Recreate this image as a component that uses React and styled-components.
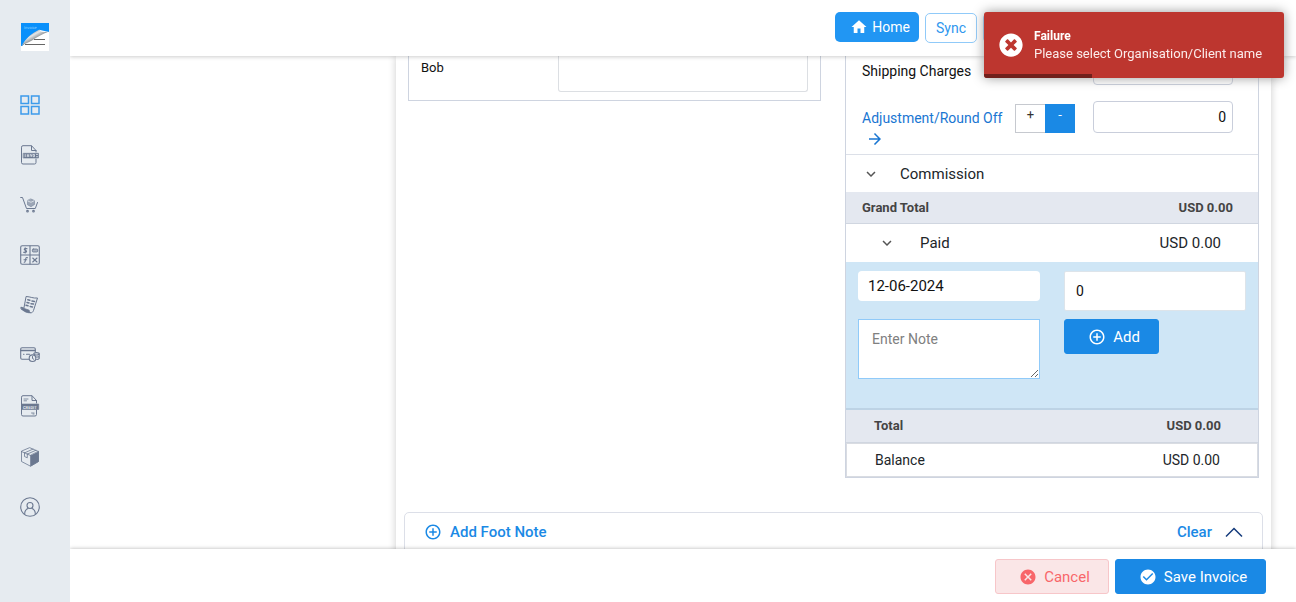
import React, { useState } from "react";
import styled, { createGlobalStyle, css } from "styled-components";
import {
  MdHome,
  MdAddCircleOutline,
  MdArrowForward,
  MdKeyboardArrowDown,
  MdCancel,
  MdCheckCircle,
} from "react-icons/md";
import { FaTimesCircle } from "react-icons/fa";

const GlobalStyle = createGlobalStyle`
  *, *::before, *::after { box-sizing: border-box; }
  body {
    margin: 0;
    background: #fff;
    color: #212529;
    font-family: Roboto, "Liberation Sans", sans-serif;
    font-size: 14px;
    line-height: 20px;
  }
  button, input, textarea { font: inherit; margin: 0; }
  button { cursor: pointer; }
  a { text-decoration: none; }
`;

const Shell = styled.div`
  display: flex;
  height: 100vh;
`;

const Sidebar = styled.nav`
  display: flex;
  flex-direction: column;
  flex: none;
  width: 70px;
  padding: 22px 20px;
  background: #e6ebf0;
  z-index: 2;
`;

const LogoLink = styled.a`
  height: 73px;
`;

const NavList = styled.ul`
  display: flex;
  flex-direction: column;
  gap: 30px;
  margin: 0;
  padding: 0;
  list-style: none;
`;

const NavLink = styled.a`
  display: block;
  color: ${(p) => (p.$active ? "#3d9bea" : "#6b7890")};
  svg { display: block; }
`;

const Main = styled.div`
  display: flex;
  flex-direction: column;
  flex: 1;
  min-width: 0;
`;

const Header = styled.header`
  display: flex;
  align-items: flex-start;
  justify-content: flex-end;
  gap: 6px;
  flex: none;
  height: 56px;
  padding: 12px 273px 0 0;
  background: #fff;
  box-shadow: 0 1px 4px rgba(0, 0, 0, 0.2);
  z-index: 1;
`;

const HeaderButton = styled.button`
  display: flex;
  align-items: center;
  justify-content: center;
  gap: 4px;
  height: 30px;
  border-radius: 5px;
  ${(p) =>
    p.$primary
      ? css`
          width: 84px;
          padding: 0 6px 0 12px;
          border: 0;
          background: #2196f3;
          color: #fff;
        `
      : css`
          width: ${p.$square ? "40px" : "52px"};
          margin-top: 1px;
          padding: 0;
          border: 1px solid #90caf9;
          background: #fff;
          color: #2f97ee;
        `}
`;

const Content = styled.main`
  flex: 1;
  min-height: 0;
  overflow: hidden;
  padding: 0 25px 0 326px;
`;

const Sheet = styled.form`
  min-height: 100%;
  padding: 0 8px;
  background: #fff;
  box-shadow: 0 0 8px rgba(0, 0, 0, 0.2);
`;

const Columns = styled.div`
  display: grid;
  grid-template-columns: 413fr 414fr;
  align-items: start;
  gap: 24px;
  padding: 0 4px;
`;

const FieldPanel = styled.section`
  display: grid;
  grid-template-columns: 137px 1fr;
  padding: 0 12px 8px;
  border: solid #ced4e0;
  border-width: 0 1px 1px;
`;

const FieldLabel = styled.label`
  padding-top: 2px;
  font-size: 13px;
  color: #111;
`;

const FieldArea = styled.textarea`
  height: 36px;
  border: solid #dcdfe3;
  border-width: 0 1px 1px;
  border-radius: 0 0 3px 3px;
  resize: none;
`;

const Summary = styled.section`
  border: solid #ced4e0;
  border-width: 0 1px 1px;
`;

const ChargeRow = styled.div`
  display: grid;
  grid-template-columns: 1fr 140px;
  height: ${(p) => (p.$first ? "45px" : "54px")};
  padding: 0 25px 0 16px;
  border-bottom: ${(p) => (p.$first ? "0" : "1px solid #dce0e8")};
`;

const ChargeLabel = styled.label`
  padding-top: 5px;
  color: #111;
`;

const AdjustGroup = styled.div`
  display: flex;
  justify-content: space-between;
  padding-right: 18px;
`;

const AdjustLink = styled.a`
  padding-top: 7px;
  color: #1976d2;
  svg { display: block; margin: 2px 0 0 4px; }
`;

const SignGroup = styled.div`
  display: flex;
  padding-top: 3px;
`;

const SignButton = styled.button`
  width: 30px;
  height: 29px;
  padding: 0 0 8px;
  border: 1px solid ${(p) => (p.$on ? "#1a89e5" : "#c6c9cf")};
  border-right-width: ${(p) => (p.$on ? "1px" : "0")};
  background: ${(p) => (p.$on ? "#1a89e5" : "#fff")};
  color: ${(p) => (p.$on ? "#fff" : "#333")};
  font-size: 13px;
`;

const AmountInput = styled.input`
  width: 100%;
  height: ${(p) => (p.$first ? "29px" : "32px")};
  padding: 0 6px;
  border: 1px solid #c9cedb;
  border-radius: 4px;
  color: #111;
  text-align: right;
`;

const Toggle = styled.button`
  display: flex;
  align-items: center;
  width: 100%;
  height: ${(p) => (p.$nested ? "38px" : "37px")};
  padding: ${(p) => (p.$nested ? "0 37px 0 32px" : "0 16px")};
  border: 0;
  background: #fff;
  color: #212529;
  font-size: 15px;
  text-align: left;
  svg { margin-right: ${(p) => (p.$nested ? "24px" : "20px")}; color: #555; }
`;

const Amount = styled.span`
  margin-left: auto;
`;

const SumRow = styled.div`
  display: flex;
  align-items: center;
  height: ${(p) => p.$height};
  padding: 0 ${(p) => (p.$nested ? "37px" : "25px")} 0 ${(p) => (p.$nested ? "28px" : "16px")};
  border-bottom: 1px solid #d0d6e0;
  background: #e4e8f0;
  color: #444;
  font-size: 13px;
  font-weight: 700;
`;

const BalanceRow = styled.div`
  display: flex;
  align-items: center;
  height: 34px;
  padding: 0 37px 0 28px;
  border: 1px solid #d9dce2;
  color: #212529;
`;

const PaidForm = styled.div`
  display: grid;
  grid-template-columns: 1fr 1fr;
  grid-template-rows: 48px auto;
  align-items: start;
  align-content: start;
  gap: 0 24px;
  height: 148px;
  padding: 9px 12px 0;
  border-bottom: 2px solid #bdd3e5;
  background: #cfe6f6;
`;

const DateInput = styled.input`
  width: 100%;
  height: 30px;
  padding: 0 10px;
  border: 0;
  border-radius: 4px;
  color: #111;
  font-size: 15px;
`;

const PaidInput = styled.input`
  width: 100%;
  height: 40px;
  padding: 0 11px;
  border: 1px solid #dde4ea;
  border-radius: 2px;
  color: #111;
`;

const NoteArea = styled.textarea`
  width: 100%;
  height: 60px;
  padding: 9px 13px;
  border: 1px solid #90caf9;
  color: #333;
  resize: both;
  &::placeholder { color: #808080; }
`;

const ActionButton = styled.button`
  display: flex;
  align-items: center;
  justify-content: center;
  gap: 7px;
  width: ${(p) => p.$width};
  height: 35px;
  padding: 0 0 0 5px;
  border: 1px solid ${(p) => (p.$danger ? "#f7c6c9" : "#1a89e5")};
  border-radius: 3px;
  background: ${(p) => (p.$danger ? "#fae6e7" : "#1a89e5")};
  color: ${(p) => (p.$danger ? "#f8666a" : "#fff")};
  font-size: 15px;
`;

const FootNote = styled.section`
  display: flex;
  align-items: flex-start;
  height: 90px;
  margin-top: 34px;
  padding: 8px 19px;
  border: 1px solid #dcdfe8;
  border-radius: 5px;
`;

const TextButton = styled.button`
  display: flex;
  align-items: center;
  gap: 8px;
  height: 22px;
  margin-left: ${(p) => (p.$end ? "auto" : "0")};
  padding: 0;
  border: 0;
  background: none;
  color: #1a89e5;
  font-size: 15px;
  font-weight: 500;
`;

const CollapseButton = styled.button`
  height: 22px;
  margin-left: 13px;
  padding: 0;
  border: 0;
  background: none;
  svg { display: block; }
`;

const Footer = styled.footer`
  display: flex;
  justify-content: flex-end;
  gap: 6px;
  flex: none;
  height: 53px;
  padding: 10px 30px 8px;
  background: #fff;
  box-shadow: 0 0 4px rgba(0, 0, 0, 0.3);
  z-index: 1;
`;

const Toast = styled.div`
  position: fixed;
  top: 12px;
  right: 12px;
  display: flex;
  align-items: center;
  gap: 11px;
  width: 300px;
  height: 66px;
  padding: 0 15px;
  overflow: hidden;
  border-radius: 3px;
  background: #bd362f;
  box-shadow: 0 0 12px #999;
  color: #fff;
  z-index: 3;
`;

const ToastTitle = styled.strong`
  display: block;
  font-size: 12px;
  line-height: 18px;
`;

const ToastMessage = styled.p`
  margin: 0;
  font-size: 13px;
  line-height: 18px;
  color: #fbeceb;
`;

const ToastProgress = styled.div`
  position: absolute;
  left: 0;
  bottom: 0;
  width: 36%;
  height: 4px;
  background: #71201c;
`;

const Icon = ({ height = 20, children }) => (
  <svg
    width="20"
    height={height}
    viewBox={`0 0 20 ${height}`}
    fill="none"
    stroke="currentColor"
    strokeWidth="1.1"
    strokeLinejoin="round"
    strokeLinecap="round"
    aria-hidden="true"
  >
    {children}
  </svg>
);

const Logo = () => (
  <svg width="30" height="30" viewBox="0 0 30 30" aria-hidden="true">
    <defs>
      <linearGradient id="curl" gradientUnits="userSpaceOnUse" x1="10" y1="10" x2="15" y2="19">
        <stop offset="0" stopColor="#8a8f94" />
        <stop offset="0.4" stopColor="#e4e6e8" />
        <stop offset="0.7" stopColor="#a9adb0" />
        <stop offset="1" stopColor="#6b6b6b" />
      </linearGradient>
    </defs>
    <path d="M1 1h28v28H1z" fill="#fff" />
    <path d="M1 1h28v9L20 8 2 24H1z" fill="#0a90fb" />
    <path d="M1.500 24C6 16 12 11 19.500 7.500c.5 2.500 3.500 3 9.500 2C22 12 17 15 12 18.500c-4 2.500-7.500 3-10.500 5.500z" fill="url(#curl)" />
    <path d="M14 17.500h11M5 22.500h20" stroke="#666" strokeWidth="1" />
    <text x="4" y="7" fill="#8fd0ff" fontSize="4" textRendering="geometricPrecision">Invoice</text>
  </svg>
);

const GridIcon = () => (
  <Icon>
    <g strokeWidth="1.500" strokeLinejoin="miter">
      <path d="M1 1h7.500v7.500H1zM11.500 1H19v7.500h-7.500zM1 11.500h7.500V19H1zM11.500 11.500H19V19h-7.500z" />
    </g>
  </Icon>
);

const InvoiceIcon = () => (
  <Icon>
    <path d="M16 7V5.500L11.500 .7H3a1.500 1.500 0 0 0-1.500 1.500v15.300A1.500 1.500 0 0 0 3 19h11.500a1.500 1.500 0 0 0 1.500-1.500V14M11.500 1v4.500H16" strokeWidth="1" />
    <path d="M3.500 8.300h15v4.700h-15z" fill="currentColor" strokeWidth="0.600" />
    <path d="M5.200 9.500v2.200M7.300 11.700V9.500l1.500 2.200V9.500M10.500 9.500l.7 2.200.7-2.200M13.500 9.500h1v2.200h-1zM16.500 9.500h1M16.500 11.700h1" stroke="#e6ebf0" strokeWidth="0.800" />
  </Icon>
);

const CartIcon = () => (
  <Icon>
    <path d="M.7 2.500h1.800L6.500 13.500h8.800l2.200-6" strokeWidth="1" />
    <path d="M11 4 14.500 5.500v4L11 11.700 7.500 9.800V5.700z" fill="currentColor" fillOpacity=".6" strokeWidth=".5" />
    <path d="m7.800 6 3.200 1.300 3-1.500" stroke="#e6ebf0" strokeWidth=".8" />
    <circle cx="7.500" cy="16.200" r=".8" />
    <circle cx="13.500" cy="16.200" r=".8" />
  </Icon>
);

const CalculatorIcon = () => (
  <Icon>
    <rect x=".7" y=".7" width="18.600" height="18.600" rx="1.500" />
    <path d="M10 1v18M1 10h18" />
    <path d="M7 3.800C4.500 2.500 3.300 4.700 5.200 5.300c2 .6 2 2.600-1.700 2M5.200 2.700v5.200M4.200 17.200c1.300.3 1-2 1.500-3.500.2-1 .8-1.400 1.800-1M4 14.700h2.700M12.700 13l4.300 4M17 13l-4.300 4" strokeWidth="1.100" />
    <rect x="12.300" y="4" width="5.400" height="3" rx="1" fill="currentColor" fillOpacity=".5" strokeWidth=".8" />
  </Icon>
);

const ReceiptIcon = () => (
  <Icon>
    <path d="M6.500 1.500c4 .2 6.500 2 11 1.500L13.500 15.500c-.6 1.600-1.600 2.500-3 2.200L1.500 14.500c-.7-1-.7-1.500-.2-2.200l2.200.8z" strokeWidth="1" />
    <path d="m1.200 12.500 8 2.700c0 1.500.6 2.200 1.300 2.500-3.500.5-8.500-1.700-9.300-5.200z" fill="currentColor" strokeWidth=".8" />
    <path d="m7.800 4.700 2 .5M12 6l2.500.4M7 7.400l2 .5M11 8.700l2.500.4M6 10.200l2 .5M10.200 11.500l2.300.4" strokeWidth="1.500" />
  </Icon>
);

const CardIcon = () => (
  <Icon>
    <path d="M9 14.200H2A1.300 1.300 0 0 1 .7 13V4A1.300 1.300 0 0 1 2 2.700h12A1.300 1.300 0 0 1 15.300 4v3" />
    <path d="M1 5.500h14" strokeWidth="1.500" />
    <path d="M3.500 9.300h.5M6.500 9.300h3" />
    <ellipse cx="16.500" cy="8.800" rx="2.700" ry="1.200" />
    <path d="M19.200 9v4.500c-.6.800-1.500 1-2.500 1M16.500 12c1.200 0 2.200-.2 2.700-.7" />
    <circle cx="12.500" cy="13.200" r="3.300" fill="#e6ebf0" />
    <path d="M12.500 11.500v2l1.200.7" strokeWidth="1" />
  </Icon>
);

const CreditIcon = () => (
  <Icon height={22}>
    <path d="M16.500 8V5.500L12 .7H3a1.500 1.500 0 0 0-1.500 1.500v17.300A1.500 1.500 0 0 0 3 21h12a1.500 1.500 0 0 0 1.500-1.500V15M12 1v4.500h4.500" strokeWidth="1" />
    <path d="M4 4h4M4 5.800h2.500M11.500 18h2.500M13 19h1" strokeWidth=".8" />
    <path d="M2 9h16.700v5.500H2z" fill="currentColor" strokeWidth=".6" />
    <text x="3" y="13.500" fill="#e6ebf0" stroke="none" fontSize="4" fontWeight="700" textRendering="geometricPrecision">CREDIT</text>
  </Icon>
);

const BoxIcon = () => (
  <Icon>
    <path d="M10 .8 18.500 4.500v10L10.500 19.200 1.500 14.500v-10z" strokeWidth=".8" />
    <path d="M18.500 4.500v10L10.500 19.200V8.500z" fill="currentColor" strokeWidth=".6" />
    <path d="m1.500 4.500 9 4M4.500 5.900l8.500-3.800M7.300 7.100l8.500-3.800M4.500 5.900v3.600l2.800 1.300V7.100" strokeWidth=".8" />
  </Icon>
);

const UserIcon = () => (
  <Icon>
    <circle cx="10" cy="10" r="9.300" />
    <circle cx="10" cy="8.500" r="3" />
    <path d="M4.700 16.800c0-3 1.300-4.500 3.300-5.300M15.300 16.800c0-3-1.300-4.500-3.300-5.300" />
  </Icon>
);

const navItems = [
  ["Dashboard", GridIcon],
  ["Invoices", InvoiceIcon],
  ["Purchases", CartIcon],
  ["Calculator", CalculatorIcon],
  ["Receipts", ReceiptIcon],
  ["Payments", CardIcon],
  ["Credit notes", CreditIcon],
  ["Products", BoxIcon],
  ["Account", UserIcon],
];

export default function App() {
  const [sign, setSign] = useState("-");
  return (
    <>
      <GlobalStyle />
      <Shell>
        <Sidebar aria-label="Main">
          <LogoLink href="#home" aria-label="Invoice home"><Logo /></LogoLink>
          <NavList>
            {navItems.map(([label, Glyph], i) => (
              <li key={label}>
                <NavLink href={`#nav-${i}`} aria-label={label} $active={i === 0}>
                  <Glyph />
                </NavLink>
              </li>
            ))}
          </NavList>
        </Sidebar>
        <Main>
          <Header>
            <HeaderButton type="button" $primary><MdHome size={18} />Home</HeaderButton>
            <HeaderButton type="button">Sync</HeaderButton>
            <HeaderButton type="button" $square aria-label="More" />
          </Header>
          <Content>
            <Sheet onSubmit={(e) => e.preventDefault()}>
              <Columns>
                <FieldPanel>
                  <FieldLabel htmlFor="bob">Bob</FieldLabel>
                  <FieldArea id="bob" />
                </FieldPanel>
                <Summary>
                  <ChargeRow $first>
                    <ChargeLabel htmlFor="shipping">Shipping Charges</ChargeLabel>
                    <AmountInput id="shipping" $first />
                  </ChargeRow>
                  <ChargeRow>
                    <AdjustGroup>
                      <AdjustLink href="#adjustment">
                        Adjustment/Round Off
                        <MdArrowForward size={18} />
                      </AdjustLink>
                      <SignGroup>
                        {["+", "-"].map((s) => (
                          <SignButton key={s} type="button" $on={sign === s} onClick={() => setSign(s)}>{s}</SignButton>
                        ))}
                      </SignGroup>
                    </AdjustGroup>
                    <AmountInput aria-label="Adjustment amount" defaultValue="0" />
                  </ChargeRow>
                  <Toggle type="button"><MdKeyboardArrowDown size={18} />Commission</Toggle>
                  <SumRow $height="32px">Grand Total<Amount>USD 0.00</Amount></SumRow>
                  <Toggle type="button" $nested><MdKeyboardArrowDown size={18} />Paid<Amount>USD 0.00</Amount></Toggle>
                  <PaidForm>
                    <DateInput aria-label="Payment date" defaultValue="12-06-2024" />
                    <PaidInput aria-label="Paid amount" defaultValue="0" />
                    <NoteArea aria-label="Note" placeholder="Enter Note" />
                    <ActionButton type="button" $width="95px"><MdAddCircleOutline size={18} />Add</ActionButton>
                  </PaidForm>
                  <SumRow $height="33px" $nested>Total<Amount>USD 0.00</Amount></SumRow>
                  <BalanceRow>Balance<Amount>USD 0.00</Amount></BalanceRow>
                </Summary>
              </Columns>
              <FootNote>
                <TextButton type="button"><MdAddCircleOutline size={18} />Add Foot Note</TextButton>
                <TextButton type="button" $end>Clear</TextButton>
                <CollapseButton type="button" aria-label="Collapse">
                  <svg width="18" height="22" viewBox="0 0 18 22" fill="none" stroke="#143a7b" strokeWidth="1.500" aria-hidden="true">
                    <path d="m1 15.500 8-8 8 8" />
                  </svg>
                </CollapseButton>
              </FootNote>
            </Sheet>
          </Content>
          <Footer>
            <ActionButton type="button" $danger $width="114px"><MdCancel size={18} />Cancel</ActionButton>
            <ActionButton type="button" $width="151px"><MdCheckCircle size={18} />Save Invoice</ActionButton>
          </Footer>
        </Main>
      </Shell>
      <Toast role="alert">
        <FaTimesCircle size={24} />
        <div>
          <ToastTitle>Failure</ToastTitle>
          <ToastMessage>Please select Organisation/Client name</ToastMessage>
        </div>
        <ToastProgress />
      </Toast>
    </>
  );
}
